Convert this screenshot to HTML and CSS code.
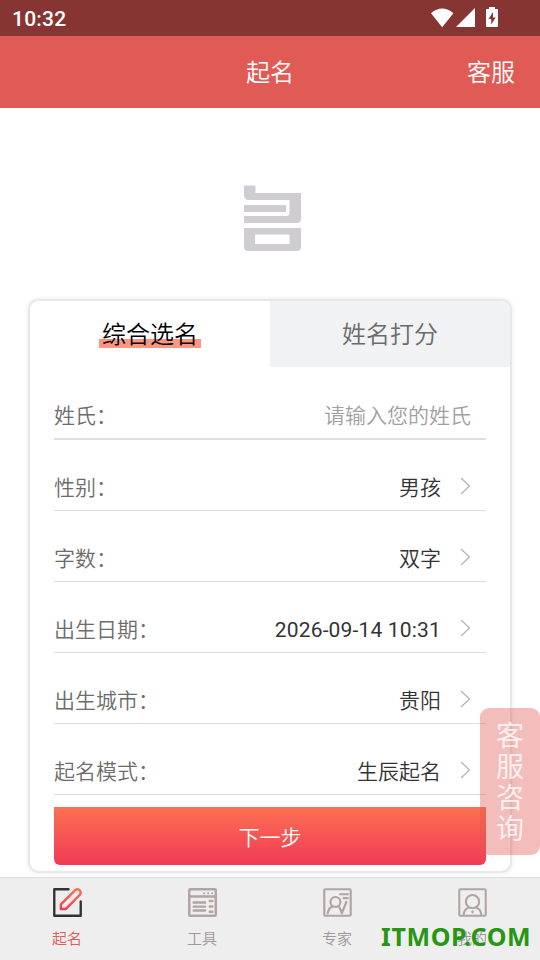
FILE: index.html
```html
<!DOCTYPE html>
<html lang="zh-CN">
<head>
<meta charset="utf-8">
<title>起名</title>
<link rel="stylesheet" href="styles.css">
</head>
<body>
<div class="app">
  <div class="status">
    <span class="time">10:32</span>
    <svg class="status-icons" width="70" height="24" viewBox="0 0 70 24" fill="#fff">
      <path d="M1 7.2Q12.200 -2 23.400 7.200L12.200 21.200Z"/>
      <path d="M45 2V21H26Z"/>
      <path fill-rule="evenodd" d="M59 1h6v2h2q1 0 1 1v16q0 1-1 1H57q-1 0-1-1V4q0-1 1-1h2zM63 6l-4.500 7h2.700v5.500l4.500-7H63z"/>
    </svg>
  </div>
  <header class="header">
    <span></span>
    <h1 class="title">起名</h1>
    <span class="service">客服</span>
  </header>
  <main class="main">
    <svg class="logo" width="58" height="67" viewBox="0 0 58 67" fill="#cfcdd2">
      <path d="M0 0.500H11.500V8H57V34Q57 38 53 38H0V31H42Q45.500 31 45.500 27.500V15H5Q0 15 0 10Z"/>
      <path d="M0 20H42V27H0Z"/>
      <path fill-rule="evenodd" d="M0 43H57V62Q57 66 53 66H4Q0 66 0 62ZM11 49.500V59H45.500V49.500Z"/>
    </svg>
    <section class="card">
      <div class="tabs">
        <div class="tab tab-active"><span class="tab-label">综合选名</span></div>
        <div class="tab">姓名打分</div>
      </div>
      <div class="form">
        <div class="row row-input"><span class="label">姓氏：</span><span class="hint">请输入您的姓氏</span></div>
        <div class="row"><span class="label">性别：</span><span class="value">男孩</span><svg class="arrow" width="11" height="18" viewBox="0 0 11 18"><path d="M1 1l8.500 8L1 17"/></svg></div>
        <div class="row"><span class="label">字数：</span><span class="value">双字</span><svg class="arrow" width="11" height="18" viewBox="0 0 11 18"><path d="M1 1l8.500 8L1 17"/></svg></div>
        <div class="row"><span class="label">出生日期：</span><span class="value date">2026-09-14 10:31</span><svg class="arrow" width="11" height="18" viewBox="0 0 11 18"><path d="M1 1l8.500 8L1 17"/></svg></div>
        <div class="row"><span class="label">出生城市：</span><span class="value">贵阳</span><svg class="arrow" width="11" height="18" viewBox="0 0 11 18"><path d="M1 1l8.500 8L1 17"/></svg></div>
        <div class="row"><span class="label">起名模式：</span><span class="value">生辰起名</span><svg class="arrow" width="11" height="18" viewBox="0 0 11 18"><path d="M1 1l8.500 8L1 17"/></svg></div>
        <div class="next">下一步</div>
      </div>
    </section>
  </main>
  <nav class="nav">
    <div class="nav-item nav-active">
      <svg width="31" height="31" viewBox="0 0 30 30" fill="none">
        <defs><linearGradient id="pen" x1="0" y1="0" x2="0" y2="1"><stop offset="0" stop-color="#fb7350"/><stop offset="1" stop-color="#f33c5c"/></linearGradient></defs>
        <path d="M16 2.200H2.200V27.800H27.800V14" stroke="#333" stroke-width="2.300" stroke-linecap="round" stroke-linejoin="round"/>
        <path d="M8.600 21.400V16.800L22.500 3Q24.500 1.300 26.600 3Q28.700 5.200 27 7.500L13.200 21.400Z" stroke="url(#pen)" stroke-width="2.400" stroke-linejoin="round"/>
      </svg>
      <span>起名</span>
    </div>
    <div class="nav-item">
      <svg width="31" height="31" viewBox="0 0 30 30" fill="none" stroke="#b0a5a4" stroke-width="2.400" stroke-linecap="round">
        <rect x="2.200" y="2.200" width="25.600" height="25.600" rx="1"/>
        <path d="M2.500 9.300H27.500M6.500 15H17.500M6.500 19H17.500M6.500 22.800H17.500M22 13.500H24.500M22 18.800H24.500M22 24H24.500"/>
        <path d="M16.500 6h.1M20.500 6h.1M24.300 6h.1" stroke-width="2"/>
      </svg>
      <span>工具</span>
    </div>
    <div class="nav-item">
      <svg width="31" height="31" viewBox="0 0 30 30" fill="none" stroke="#b0a5a4" stroke-width="2.100" stroke-linecap="round" stroke-linejoin="round">
        <rect x="2.200" y="2.200" width="25.600" height="25.600" rx="1"/>
        <circle cx="13" cy="14.500" r="4.800"/>
        <path d="M5.500 25.500Q6.500 19.800 10.500 18.800M15.500 18.800Q17.500 19.500 19.200 25.500L23.500 14.500M17.500 7H25M21 10.800H25"/>
      </svg>
      <span>专家</span>
    </div>
    <div class="nav-item">
      <svg width="31" height="31" viewBox="0 0 30 30" fill="none" stroke="#b0a5a4" stroke-width="2" stroke-linecap="round">
        <rect x="2.200" y="2.200" width="25.600" height="25.600" rx="1"/>
        <circle cx="15" cy="14.200" r="6.400"/>
        <path d="M6.500 26.500Q7 21.500 11 20M19 20Q23 21.500 23.500 26.500"/>
        <path d="M15 23v2M14 24h2" stroke-width="1.200"/>
      </svg>
      <span>我的</span>
    </div>
  </nav>
  <div class="consult"><span>客</span><span>服</span><span>咨</span><span>询</span></div>
  <div class="watermark">ITMOP.COM</div>
</div>
</body>
</html>
```
FILE: styles.css
```css
* { box-sizing: border-box; }
body {
  margin: 0;
  font-family: Roboto, "Noto Sans CJK SC", sans-serif;
  font-weight: 350;
  color: #333;
}
.app {
  position: relative;
  width: 540px;
  height: 960px;
  display: flex;
  flex-direction: column;
  overflow: hidden;
  background: #fff;
}
.status {
  height: 36px;
  background: #873532;
  display: flex;
  justify-content: space-between;
  align-items: center;
  padding: 0 40px 0 12px;
}
.time { color: #fff; font-size: 21px; font-weight: 500; letter-spacing: 0.2px; padding-top: 2px; }
.status-icons { margin-top: -1px; }
.header {
  height: 72px;
  background: #e15b56;
  color: #fff;
  display: grid;
  grid-template-columns: 1fr auto 1fr;
  align-items: center;
  padding: 0 25px 3px;
  font-size: 24px;
}
.title { margin: 0; font-size: 24px; font-weight: inherit; }
.service { text-align: right; }
.main {
  height: 769px;
  padding: 77px 30px 0;
}
.logo { display: block; margin: 0 0 49px 214px; }
.card {
  height: 570px;
  border-radius: 9px;
  background: #fff;
  box-shadow: 0 0 0 2px #e8e8e8, 0 0 3px 4px #f5f5f5;
  overflow: hidden;
}
.tabs { display: flex; height: 66px; }
.tab {
  flex: 1;
  display: flex;
  align-items: center;
  justify-content: center;
  background: #f1f2f4;
  color: #6b6b6b;
  font-size: 24px;
  padding-bottom: 4px;
}
.tab-active { background: #fff; color: #000; }
.tab-label {
  line-height: 34px;
  padding: 6px 3px 0;
  background: linear-gradient(#fc9680, #fc9680) 0 27px / 100% 9px no-repeat;
}
.form { padding: 0 24px; }
.row {
  display: flex;
  align-items: center;
  height: 71px;
  padding: 22px 15px 0 0;
  border-bottom: 1px solid #dedede;
  font-size: 21px;
}
.row-input { height: 73px; padding-top: 23px; border-bottom-width: 2px; }
.label { flex: 1; color: #6c6c6c; text-spacing-trim: space-all; }
.date { font-weight: 400; letter-spacing: 0.17px; padding-top: 3px; }
.hint { color: #a0a0a0; }
.arrow {
  margin: -1px 0 0 19px;
  fill: none;
  stroke: #b5b5b5;
  stroke-width: 1.3;
}
.next {
  margin-top: 12px;
  height: 58px;
  border-radius: 0 0 6px 6px;
  background: linear-gradient(#fb7052, #f23a57);
  color: #fff;
  font-size: 21px;
  display: flex;
  align-items: center;
  justify-content: center;
}
.nav {
  height: 83px;
  border-top: 1px solid #dcdcdc;
  background: #eee;
  display: flex;
}
.nav-item {
  flex: 1;
  display: flex;
  flex-direction: column;
  align-items: center;
  padding: 9px 1px 0 0;
  color: #a09797;
  font-size: 15px;
  line-height: 22px;
}
.nav-item span { margin-top: 10px; }
.nav-active { color: #e15b56; }
.consult {
  position: absolute;
  left: 480px;
  top: 708px;
  width: 60px;
  height: 147px;
  border-radius: 9px;
  background: rgba(225, 91, 86, 0.4);
  color: rgba(255, 255, 255, 0.8);
  display: flex;
  flex-direction: column;
  align-items: center;
  padding-top: 13px;
  font-size: 28px;
  font-weight: 400;
  line-height: 31px;
}
.watermark {
  position: absolute;
  left: 381px;
  top: 919px;
  font: 700 25px/34px "Noto Sans", sans-serif;
  letter-spacing: 0.65px;
  color: #279713;
}
```
